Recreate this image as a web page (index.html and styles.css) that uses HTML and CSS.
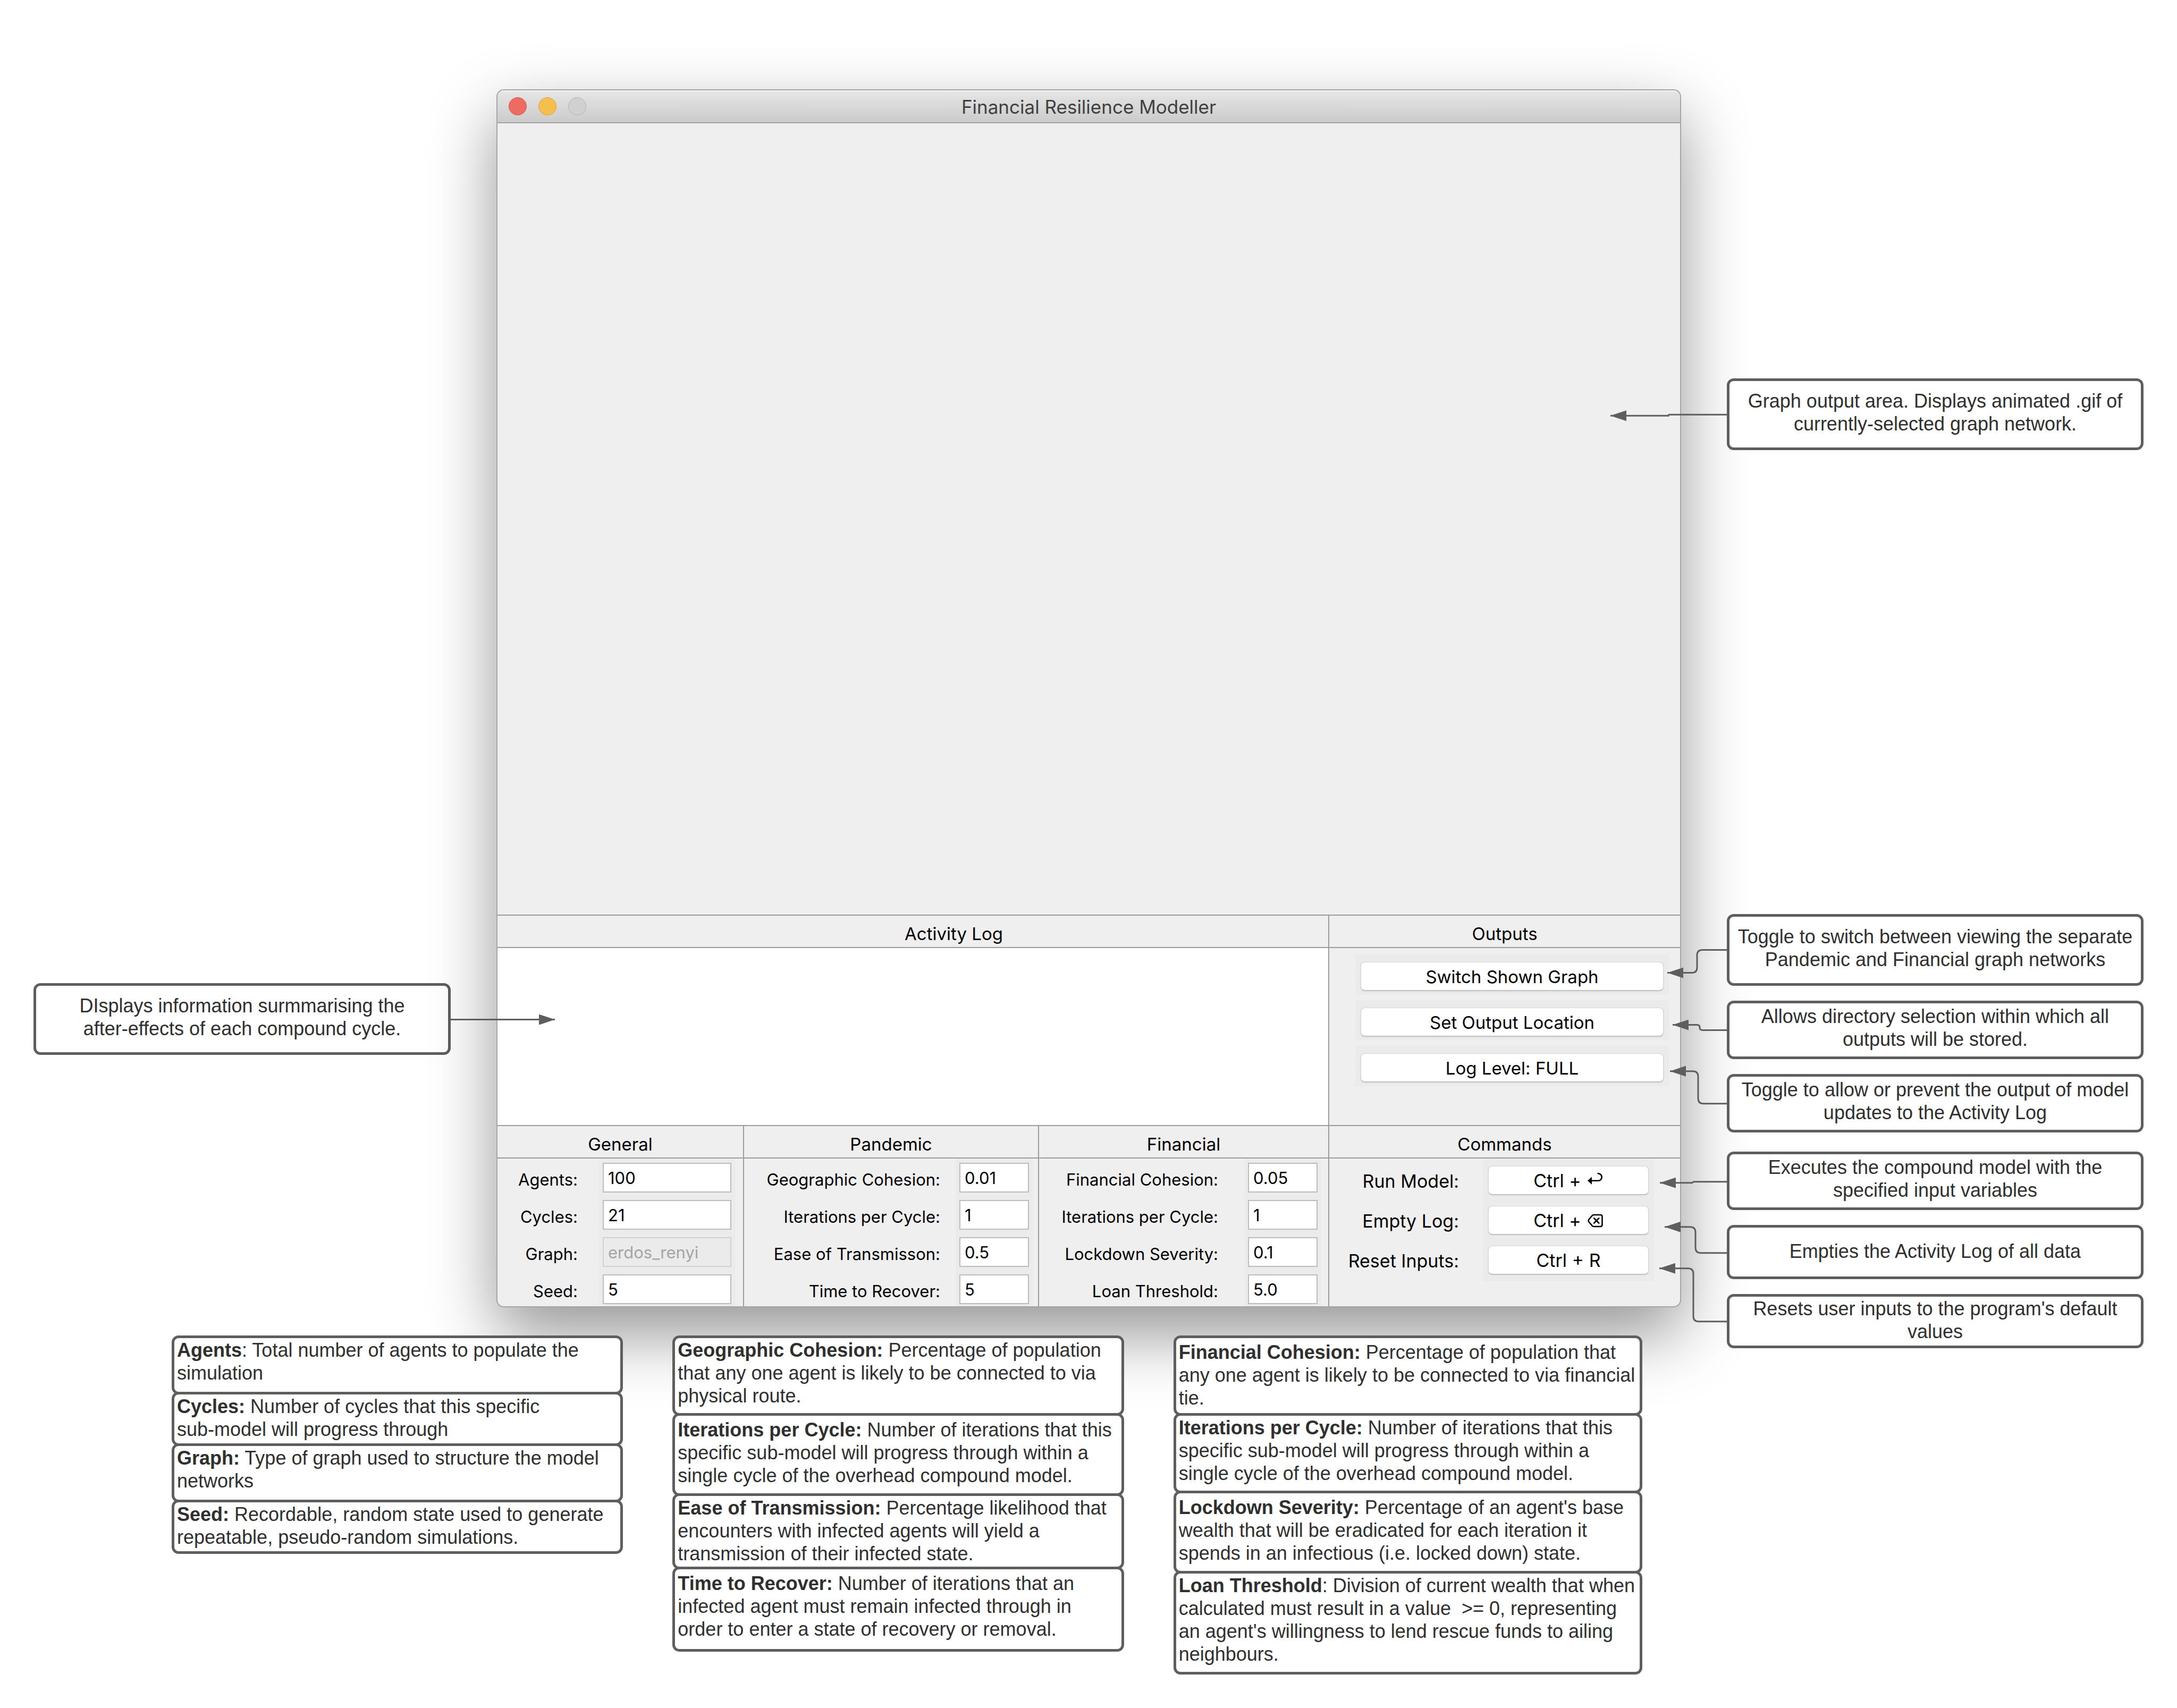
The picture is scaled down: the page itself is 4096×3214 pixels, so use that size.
FILE: index.html
```html
<!DOCTYPE html>
<html lang="en">
<head>
<meta charset="utf-8">
<title>Financial Resilience Modeller</title>
<link rel="stylesheet" href="styles.css">
</head>
<body>
<main class="diagram">

  <div class="callouts callouts-left">
    <p class="callout callout-tall"><span>DIsplays information surmmarising the <span class="keep">after-effects</span> of each compound cycle.</span></p>
  </div>

  <section class="window">
    <header class="titlebar">
      <div class="lights">
        <button class="light light-close" type="button" aria-label="Close"></button>
        <button class="light light-minimise" type="button" aria-label="Minimise"></button>
        <button class="light light-zoom" type="button" aria-label="Zoom" disabled></button>
      </div>
      <h1 class="title">Financial Resilience Modeller</h1>
    </header>

    <div class="graph"></div>

    <div class="panels">
      <h2 class="heading heading-log" id="log-heading">Activity Log</h2>
      <h2 class="heading divided">Outputs</h2>

      <textarea class="log" aria-labelledby="log-heading" readonly></textarea>
      <div class="outputs divided">
        <div class="button-frame"><button class="button" type="button">Switch Shown Graph</button></div>
        <div class="button-frame"><button class="button" type="button">Set Output Location</button></div>
        <div class="button-frame"><button class="button" type="button">Log Level: FULL</button></div>
      </div>

      <h2 class="heading">General</h2>
      <h2 class="heading divided">Pandemic</h2>
      <h2 class="heading divided">Financial</h2>
      <h2 class="heading divided">Commands</h2>

      <form class="fields fields-general">
        <div class="labels">
          <label for="agents">Agents:</label>
          <label for="cycles">Cycles:</label>
          <label for="graph">Graph:</label>
          <label for="seed">Seed:</label>
        </div>
        <div class="inputs">
          <input id="agents" type="text" value="100">
          <input id="cycles" type="text" value="21">
          <input id="graph" type="text" value="erdos_renyi" disabled>
          <input id="seed" type="text" value="5">
        </div>
      </form>

      <form class="fields fields-pandemic divided">
        <div class="labels">
          <label for="geo-cohesion">Geographic Cohesion:</label>
          <label for="pan-iterations">Iterations per Cycle:</label>
          <label for="transmission">Ease of Transmisson:</label>
          <label for="recover">Time to Recover:</label>
        </div>
        <div class="inputs">
          <input id="geo-cohesion" type="text" value="0.01">
          <input id="pan-iterations" type="text" value="1">
          <input id="transmission" type="text" value="0.5">
          <input id="recover" type="text" value="5">
        </div>
      </form>

      <form class="fields fields-financial divided">
        <div class="labels">
          <label for="fin-cohesion">Financial Cohesion:</label>
          <label for="fin-iterations">Iterations per Cycle:</label>
          <label for="severity">Lockdown Severity:</label>
          <label for="loan">Loan Threshold:</label>
        </div>
        <div class="inputs">
          <input id="fin-cohesion" type="text" value="0.05">
          <input id="fin-iterations" type="text" value="1">
          <input id="severity" type="text" value="0.1">
          <input id="loan" type="text" value="5.0">
        </div>
      </form>

      <div class="commands divided">
        <div class="command-labels">
          <span id="run-label">Run Model:</span>
          <span id="empty-label">Empty Log:</span>
          <span id="reset-label">Reset Inputs:</span>
        </div>
        <div class="command-buttons">
          <button class="button" type="button" aria-describedby="run-label">Ctrl +
            <svg class="key" viewBox="0 0 30 26" aria-hidden="true"><path d="M0 12.800 8 5.600V20Z" fill="currentColor"/><path d="M6 12.800H20A6.750 6.750 0 0 0 20 -0.700H19.500" fill="none" stroke="currentColor" stroke-width="2.600" stroke-linecap="round"/></svg>
          </button>
          <button class="button" type="button" aria-describedby="empty-label">Ctrl +
            <svg class="key" viewBox="0 0 30 26" aria-hidden="true"><path d="M12 2H24Q27.500 2 27.500 5.500V20.500Q27.500 24 24 24H12Q10 24 8.700 22.700L2.300 15Q1 13 2.300 11L8.700 3.300Q10 2 12 2ZM12.200 8.500 21.200 17.500M21.200 8.500 12.200 17.500" fill="none" stroke="currentColor" stroke-width="2.600" stroke-linecap="round" stroke-linejoin="round"/></svg>
          </button>
          <button class="button" type="button" aria-describedby="reset-label">Ctrl + R</button>
        </div>
      </div>
    </div>
  </section>

  <div class="callouts callouts-right">
    <p class="callout callout-tall callout-graph">Graph output area. Displays animated .gif of currently-selected graph network.</p>
    <p class="callout callout-tall">Toggle to switch between viewing the separate Pandemic and Financial graph networks</p>
    <p class="callout">Allows directory selection within which all outputs will be stored.</p>
    <p class="callout callout-last-output">Toggle to allow or prevent the output of model updates to the Activity Log</p>
    <p class="callout">Executes the compound model with the specified input variables</p>
    <p class="callout callout-short">Empties the Activity Log of all data</p>
    <p class="callout callout-short">Resets user inputs to the program's default values</p>
  </div>

  <div class="notes">
    <div class="note-stack">
      <p class="note note-110"><b>Agents</b>: Total number of agents to populate the simulation</p>
      <p class="note note-100"><b>Cycles:</b> Number of cycles that this specific <span class="keep">sub-model</span> will progress through</p>
      <p class="note note-110"><b>Graph:</b> Type of graph used to structure the model networks</p>
      <p class="note note-100"><b>Seed:</b> Recordable, random state used to generate repeatable, pseudo-random simulations.</p>
    </div>
    <div class="note-stack">
      <p class="note note-150"><b>Geographic Cohesion:</b> Percentage of population that any one agent is likely to be connected to via physical route.</p>
      <p class="note note-156 note-roomy"><b>Iterations per Cycle:</b> Number of iterations that this specific sub-model will progress through within a single cycle of the overhead compound model.</p>
      <p class="note note-143"><b>Ease of Transmission:</b> Percentage likelihood that encounters with infected agents will yield a transmission of their infected state.</p>
      <p class="note note-160 note-roomy"><b>Time to Recover:</b> Number of iterations that an infected agent must remain infected through in order to enter a state of recovery or removal.</p>
    </div>
    <div class="note-stack">
      <p class="note note-150 note-roomy"><b>Financial Cohesion:</b> Percentage of population that any one agent is likely to be connected to via financial tie.</p>
      <p class="note note-150"><b>Iterations per Cycle:</b> Number of iterations that this specific sub-model will progress through within a single cycle of the overhead compound model.</p>
      <p class="note note-156 note-roomy"><b>Lockdown Severity:</b> Percentage of an agent's base wealth that will be eradicated for each iteration it spends in an infectious (i.e. locked down) state.</p>
      <p class="note note-195"><b>Loan Threshold</b>: Division of current wealth that when calculated must result in a value&nbsp; &gt;= 0, representing an agent's willingness to lend rescue funds to ailing neighbours.</p>
    </div>
  </div>

  <svg class="connectors" viewBox="0 0 4096 3214" preserveAspectRatio="none" aria-hidden="true">
    <defs>
      <marker id="tip" viewBox="0 0 30 20" refX="30" refY="10" markerWidth="30" markerHeight="20" markerUnits="userSpaceOnUse" orient="auto">
        <path d="M0 0 30 10 0 20Z"/>
      </marker>
    </defs>
    <g>
      <path d="M847 1918H1044"/>
      <path d="M3250 780H3141Q3139 780 3139 782H3030"/>
      <path d="M3250 1787H3203Q3193 1787 3193 1797V1820Q3193 1830 3183 1830H3137"/>
      <path d="M3250 1938H3203Q3198 1938 3198 1933T3193 1928H3147"/>
      <path d="M3250 2076H3205Q3195 2076 3195 2066V2025Q3195 2015 3185 2015H3142"/>
      <path d="M3250 2223H3187Q3185 2223 3184 2225H3123"/>
      <path d="M3250 2357H3200Q3190 2357 3190 2347V2318Q3190 2308 3180 2308H3132"/>
      <path d="M3250 2486H3196Q3186 2486 3186 2476V2396Q3186 2386 3176 2386H3122"/>
    </g>
  </svg>
</main>
</body>
</html>
```
FILE: styles.css
```css
* {
  box-sizing: border-box;
}

body {
  margin: 0;
  background: #fff;
  color: #000;
  font: 33px/44px Inter, Roboto, sans-serif;
}

h1, h2, p {
  margin: 0;
  font: inherit;
}

.diagram {
  position: relative;
  display: grid;
  grid-template-columns: minmax(0, 785fr) minmax(0, 2229fr) minmax(0, 784fr);
  column-gap: 86px;
  align-items: start;
  padding: 168px 63px 64px;
}

/* Application window */

.window {
  grid-area: 1 / 2;
  overflow: hidden;
  border: 2px solid #a6a6a6;
  border-radius: 14px;
  background: #efefef;
  box-shadow: 0 50px 124px rgba(0, 0, 0, 0.42);
}

.titlebar {
  display: grid;
  grid-template-columns: 1fr auto 1fr;
  align-items: center;
  height: 62px;
  padding: 0 21px;
  border-bottom: 2px solid #a3a3a3;
  background: linear-gradient(#e6e6e6, #cbcbcb);
  box-shadow: inset 0 2px #f3f3f3;
}

.lights {
  display: flex;
  gap: 22px;
}

.light {
  width: 34px;
  height: 34px;
  padding: 0;
  border: 1px solid #dc5549;
  border-radius: 50%;
  background: #ed6b60;
}

.light-minimise {
  border-color: #dda13c;
  background: #f5bf4f;
}

.light-zoom {
  border-color: #b4b4b4;
  background: #d0d0d0;
}

.title {
  padding-top: 2px;
  color: #404040;
  font-size: 35px;
}

.graph {
  height: 1489px;
}

.panels {
  display: grid;
  grid-template-columns: 462fr 555fr 546fr 662fr;
}

.heading {
  height: 63px;
  padding-top: 12px;
  border-top: 2px solid #9c9c9c;
  border-bottom: 2px solid #9c9c9c;
  text-align: center;
}

.heading-log,
.log {
  grid-column: span 3;
}

.heading-log {
  padding-left: 154px;
}

.divided {
  border-left: 2px solid #9c9c9c;
}

.log {
  width: 100%;
  height: 333px;
  padding: 10px;
  border: 0;
  background: #fff;
  font: inherit;
  resize: none;
}

/* Buttons */

.button {
  display: flex;
  align-items: center;
  justify-content: center;
  gap: 12px;
  width: 100%;
  height: 54px;
  padding: 2px 0 0;
  border: 1px solid #d6d6d6;
  border-bottom-color: #bdbdbd;
  border-radius: 8px;
  background: #fff;
  box-shadow: 0 1px 2px rgba(0, 0, 0, 0.2);
  color: #000;
  font: inherit;
}

.key {
  width: 30px;
  height: 26px;
  overflow: visible;
}

.outputs {
  display: flex;
  flex-direction: column;
  gap: 10px;
  padding: 12px 21px 0 49px;
}

.button-frame {
  padding: 14px 10px 8px;
  background: #ebebeb;
}

.commands {
  display: grid;
  grid-template-columns: 1fr 322px;
  align-items: start;
  gap: 45px;
  padding: 1px 49px 0 0;
  font-size: 34px;
}

.command-labels,
.command-buttons {
  display: grid;
  grid-auto-rows: 54px;
  gap: 21px;
  padding: 13px 10px;
}

.command-labels {
  justify-items: end;
  align-items: center;
  padding: 15px 0 0;
}

.command-buttons {
  background: #ebebeb;
}

/* Parameter fields */

.fields {
  display: grid;
  height: 278px;
  font-size: 31px;
}

.fields-general {
  grid-template-columns: 1fr 256px;
  gap: 40px;
  padding-right: 15px;
}

.fields-pandemic {
  grid-template-columns: 1fr 145px;
  gap: 29px;
  padding-right: 10px;
}

.fields-financial {
  grid-template-columns: 1fr 145px;
  gap: 49px;
  padding-right: 13px;
}

.labels,
.inputs {
  display: grid;
  grid-auto-rows: 56px;
  gap: 14px;
  padding: 8px 7px 4px;
}

.labels {
  justify-items: end;
  align-items: center;
  padding: 12px 0 0;
}

.inputs {
  background: #ebebeb;
}

.inputs input {
  width: 100%;
  min-width: 0;
  padding: 2px 8px 0;
  border: 2px solid #bcbcbc;
  background: #fff;
  color: #000;
  font: inherit;
}

.inputs input:disabled {
  border-color: #d2d2d2;
  background: #ebebeb;
  color: #a5a5a5;
}

/* Callouts beside the window */

.callouts {
  display: flex;
  flex-direction: column;
  gap: 28px;
  color: #2f2f2f;
  font: 36px/43px "Liberation Sans", Arial, sans-serif;
}

.callouts-left {
  grid-area: 1 / 1;
  padding-top: 1682px;
}

.callouts-right {
  grid-area: 1 / 3 / span 2;
  padding-top: 544px;
}

.callout {
  display: flex;
  align-items: center;
  justify-content: center;
  height: 110px;
  padding: 0 10px 8px;
  border: 5px solid #5e5e5e;
  border-radius: 13px;
  background: #fff;
  text-align: center;
}

.callout-tall {
  height: 135px;
}

.callout-short {
  height: 102px;
  padding-bottom: 4px;
}

.callout-graph {
  margin-bottom: 845px;
}

.callout-last-output {
  margin-bottom: 8px;
}

/* Notes under the window */

.notes {
  grid-area: 2 / 1 / auto / -1;
  display: grid;
  grid-template-columns: minmax(0, 849fr) minmax(0, 849fr) minmax(0, 882fr);
  align-items: start;
  gap: 93px;
  margin: 53px 943px 0 260px;
  color: #2f2f2f;
  font: 36px/43px "Liberation Sans", Arial, sans-serif;
}

.note {
  padding: 1px 5px 0;
  border: 5px solid #5e5e5e;
  border-radius: 13px;
  background: #fff;
}

.note + .note {
  margin-top: -5px;
}

.note-roomy {
  padding-top: 5px;
}

.note-100 {
  min-height: 102px;
}

.note-110 {
  min-height: 111px;
}

.note-143 {
  min-height: 143px;
}

.note-150 {
  min-height: 151px;
}

.note-156 {
  min-height: 156px;
}

.note-160 {
  min-height: 160px;
}

.note-195 {
  min-height: 195px;
}

.keep {
  white-space: nowrap;
}

/* Arrows drawn over the window */

.connectors {
  position: absolute;
  inset: 0;
  width: 100%;
  height: 100%;
  pointer-events: none;
}

.connectors g {
  fill: none;
  stroke: #5e5e5e;
  stroke-width: 3px;
}

.connectors g path {
  marker-end: url(#tip);
}

.connectors marker path {
  fill: #5e5e5e;
  stroke: none;
}
```
